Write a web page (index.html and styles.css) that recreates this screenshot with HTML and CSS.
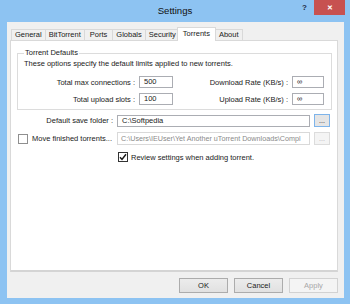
FILE: index.html
```html
<!DOCTYPE html>
<html lang="en">
<head>
    <meta charset="UTF-8">
    <title>Settings</title>
    <link rel="stylesheet" href="styles.css">
</head>
<body>
    <div class="window">
        <div class="titlebar">
            <div class="title">Settings</div>
            <div class="controls">
                <span class="help">?</span>
                <span class="close">&#x2715;</span>
            </div>
        </div>

        <div class="client">
            <div class="tabs">
                <div class="tab">General</div>
                <div class="tab">BitTorrent</div>
                <div class="tab wide">Ports</div>
                <div class="tab">Globals</div>
                <div class="tab">Security</div>
                <div class="tab active">Torrents</div>
                <div class="tab">About</div>
            </div>

            <div class="tab-panel">
                <fieldset class="group">
                    <legend>Torrent Defaults</legend>
                    <p class="group-note">These options specify the default limits applied to new torrents.</p>
                    <div class="limits">
                        <label class="limit-label">Total max connections :</label>
                        <div class="field">500</div>
                        <label class="limit-label">Download Rate (KB/s) :</label>
                        <div class="field">&infin;</div>
                        <label class="limit-label">Total upload slots :</label>
                        <div class="field">100</div>
                        <label class="limit-label">Upload Rate (KB/s) :</label>
                        <div class="field">&infin;</div>
                    </div>
                </fieldset>

                <div class="folders">
                    <label class="folder-label">Default save folder :</label>
                    <div class="field">C:\Softpedia</div>
                    <button class="browse focused">...</button>

                    <label class="folder-label check-label">
                        <span class="check"></span>
                        Move finished torrents...
                    </label>
                    <div class="field disabled">C:\Users\IEUser\Yet Another uTorrent Downloads\Compl</div>
                    <button class="browse" disabled>...</button>

                    <label class="review check-label">
                        <span class="check checked">
                            <svg width="8" height="8" viewBox="0 0 8 8"><path d="M1 4.2 L3 6.4 L7 1.2" fill="none" stroke="#1a1a1a" stroke-width="1.5"/></svg>
                        </span>
                        Review settings when adding torrent.
                    </label>
                </div>
            </div>

            <div class="buttons">
                <button class="dialog-button">OK</button>
                <button class="dialog-button">Cancel</button>
                <button class="dialog-button" disabled>Apply</button>
            </div>
        </div>
    </div>
</body>
</html>
```

FILE: styles.css
```css
/* Dialog window */
:root {
    --frame: #8dc3f2;
    --face: #f0f0f0;
    --line: #d9d9d9;
    --field-border: #abadb3;
    --text: #1a1a1a;
    --muted: #8a8a8a;
}

* {
    margin: 0;
    padding: 0;
    box-sizing: border-box;
    font-family: 'Liberation Sans', Arial, sans-serif;
}

body {
    width: 350px;
    height: 304px;
    overflow: hidden;
    background: var(--frame);
    color: var(--text);
    font-size: 7.5px;
}

.window {
    width: 350px;
    height: 304px;
    background: var(--frame);
}

.titlebar {
    position: relative;
    height: 22px;
}

.title {
    text-align: center;
    line-height: 22px;
    font-size: 9.6px;
    color: #111;
}

.controls {
    position: absolute;
    top: 0;
    right: 5px;
    display: flex;
    align-items: flex-start;
}

.help {
    margin-top: 3px;
    margin-right: 7px;
    font-size: 8px;
    font-weight: bold;
    color: #1d2d44;
}

.close {
    width: 31px;
    height: 15px;
    background: #c75150;
    color: white;
    font-size: 7px;
    font-weight: bold;
    line-height: 15px;
    text-align: center;
}

.client {
    height: 276px;
    margin: 0 6px 0 7px;
    padding: 5px 6px 0 3px;
    background: var(--face);
}

/* Tabs */
.tabs {
    display: flex;
    align-items: flex-end;
    padding-left: 1px;
    height: 13px;
}

.tab {
    height: 11px;
    padding: 0 3px;
    margin-right: -1px;
    border: 1px solid var(--line);
    border-bottom: none;
    background: #f0f0f0;
    line-height: 10px;
    white-space: nowrap;
}

.tab.wide {
    padding: 0 5px;
}

.tab.active {
    position: relative;
    z-index: 1;
    height: 14px;
    margin: 0 -1px -1px -2px;
    padding: 0 5px;
    background: white;
    line-height: 11px;
}

.tab-panel {
    height: 232px;
    padding: 8px 5px 0 6px;
    border: 1px solid var(--line);
    border-bottom: 2px solid #d4d4d4;
    background: white;
}

/* Torrent defaults group */
.group {
    padding: 3px 6px 4px;
    border: 1px solid #dcdcdc;
}

.group legend {
    padding: 0 1px;
    line-height: 8px;
}

.group-note {
    line-height: 8px;
    white-space: nowrap;
}

.limits {
    display: grid;
    grid-template-columns: 111px 34px 111px 32px;
    column-gap: 4px;
    row-gap: 5px;
    margin-top: 8px;
    align-items: center;
}

.limit-label,
.folder-label {
    text-align: right;
    white-space: nowrap;
}

.field {
    height: 12px;
    padding: 0 4px;
    border: 1px solid var(--field-border);
    background: white;
    line-height: 10px;
    white-space: nowrap;
    overflow: hidden;
}

.field.disabled {
    height: 13px;
    padding: 0 3px;
    border-color: #d9d9d9;
    color: var(--muted);
    font-size: 7.2px;
    line-height: 11px;
}

/* Folder options */
.folders {
    display: grid;
    grid-template-columns: 96px 193px 16px;
    column-gap: 4px;
    row-gap: 5px;
    margin-top: 4px;
    align-items: center;
}

.browse {
    height: 13px;
    border: 1px solid #adadad;
    background: #e5e5e5;
    color: var(--text);
    font-size: 7px;
    line-height: 8px;
}

.browse.focused {
    border-color: #7eb4ea;
}

.browse:disabled {
    border-color: #dcdcdc;
    background: #f4f4f4;
    color: #b0b0b0;
}

.check-label {
    display: flex;
    align-items: center;
    gap: 4px;
    text-align: left;
}

.check {
    flex: none;
    display: flex;
    align-items: center;
    justify-content: center;
    width: 10px;
    height: 10px;
    margin-left: 1px;
    border: 1px solid #8f8f8f;
    background: white;
}

.check.checked {
    border-color: #333;
}

.review {
    grid-column: 2 / 4;
    gap: 3px;
    margin-top: 2px;
    white-space: nowrap;
}

/* Bottom buttons */
.buttons {
    display: flex;
    justify-content: flex-end;
    gap: 6px;
    margin-top: 6px;
}

.dialog-button {
    width: 49px;
    height: 15px;
    border: 1px solid #acacac;
    background: linear-gradient(#ececec, #e1e1e1);
    color: var(--text);
    font-size: 7.5px;
}

.dialog-button:disabled {
    border-color: #d2d2d2;
    background: #f4f4f4;
    color: #a8a8a8;
}
```
